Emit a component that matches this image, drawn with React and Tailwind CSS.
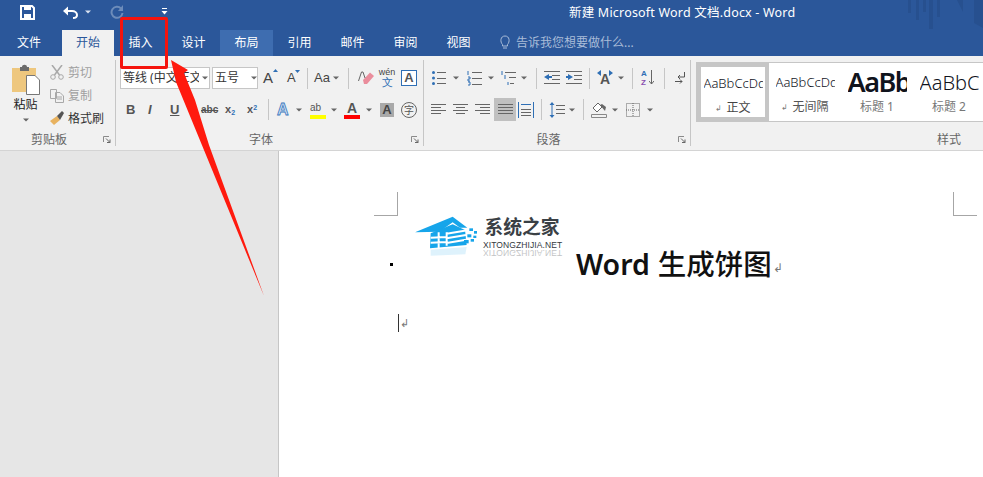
import React from "react";

const S = ({ w, h, children, className = "" }) => (
  <svg width={w} height={h} viewBox={`0 0 ${w} ${h}`} className={"block shrink-0 " + className}>{children}</svg>
);
const Caret = ({ className = "", color = "#666" }) => (
  <S w={6} h={4} className={className}><path d="M0 0.5H6L3 3.5Z" fill={color} /></S>
);
const Sep = ({ className = "" }) => <span className={"block w-px h-[21px] bg-[#c6c6c6] shrink-0 " + className} />;
const Launcher = () => (
  <S w={8} h={7} className="mb-[1px]">
    <path d="M0.5 6V0.5H6" fill="none" stroke="#8a8a8a" />
    <path d="M3 2.5L7 6.5M7 3.5V6.5H4" fill="none" stroke="#666" />
  </S>
);
const GroupLabel = ({ children }) => (
  <div className="mt-auto flex h-[12px] items-center">
    <span className="flex-1 text-center text-[12px] leading-[12px] text-[#666]">{children}</span>
    <span className="flex w-[17px] justify-start pl-[5px]"><Launcher /></span>
  </div>
);
const Lines = ({ rows, x1 = 0, x2 = 15 }) => (
  <path d={rows.map((r) => `M${r[1] ?? x1} ${r[0]}.5H${r[2] ?? x2}`).join("")} stroke="#666" fill="none" />
);

const Tab = ({ children, className = "w-[53px] text-white" }) => (
  <div className={"flex h-[26px] items-center justify-center pb-[1px] text-[12px] " + className}>{children}</div>
);

const StyleItem = ({ className, sample, mark, label, labelClass }) => (
  <div className={"flex shrink-0 flex-col items-center " + className}>
    <div className={"flex h-[33px] w-[59px] items-center overflow-hidden whitespace-nowrap text-[#10131c] " + sample}>AaBbCcDdEe</div>
    <div className={"flex h-[15px] items-center gap-[4px] text-[12px] leading-[15px] " + labelClass}>
      {mark && <span className="text-[8px] text-[#777]">↲</span>}
      {label}
    </div>
  </div>
);

export default function App() {
  return (
    <div className="relative flex h-[477px] w-[983px] flex-col overflow-hidden bg-white font-['Noto_Sans','Noto_Sans_CJK_SC',sans-serif]">
      {/* title bar */}
      <div className="relative flex h-[30px] shrink-0 items-center bg-[#2b579a]">
        <S w={983} h={30} className="absolute left-0 top-0">
          <g fill="#27508f">
            <rect x="908" width="3" height="13" /><rect x="916" width="3" height="20" /><rect x="923" width="3" height="12" />
            <rect x="929" width="4" height="29" /><rect x="937" width="3" height="17" />
            <path d="M957 0H963V12ZM974 0H983V28L974 23Z" />
          </g>
        </S>
        <S w={15} h={15} className="relative ml-[20px] -mt-[6px]">
          <path d="M1 1H12L14 3V14H1Z" fill="none" stroke="#fff" strokeWidth="2" />
          <rect x="4" y="1" width="7" height="4" fill="#fff" /><rect x="4" y="9" width="7" height="5" fill="#fff" />
        </S>
        <S w={16} h={13} className="relative ml-[27px] -mt-[6px]">
          <path d="M2 5H10C13 5 15 7 15 9C15 11 13 12 11 12" fill="none" stroke="#fff" strokeWidth="2" />
          <path d="M1 5L6 0.5V9.5Z" fill="#fff" />
        </S>
        <Caret color="#d9e2f0" className="relative ml-[7px] -mt-[6px]" />
        <S w={14} h={14} className="relative ml-[19px] -mt-[6px]">
          <path d="M11 3.5A5.5 5.5 0 1 0 12.5 8" fill="none" stroke="#6d8cba" strokeWidth="2" />
          <path d="M13 0V6H8Z" fill="#6d8cba" />
        </S>
        <S w={7} h={7} className="relative ml-[37px] -mt-[8px]">
          <path d="M1 0.5H6" stroke="#fff" /><path d="M0.5 3H6.5L3.5 6.5Z" fill="#fff" />
        </S>
        <div className="relative ml-[401px] -mt-[4px] whitespace-nowrap text-[12.5px] tracking-[0.2px] text-white">新建 Microsoft Word 文档.docx - Word</div>
      </div>

      {/* tabs */}
      <div className="flex h-[26px] shrink-0 items-center bg-[#2b579a]">
        <Tab className="w-[62px] pr-[4px] text-white">文件</Tab>
        <Tab className="w-[52px] bg-[#f1f1f1] text-[#2b579a]">开始</Tab>
        <Tab>插入</Tab>
        <Tab>设计</Tab>
        <Tab className="w-[53px] bg-[#3e6db0] text-white">布局</Tab>
        <Tab>引用</Tab>
        <Tab>邮件</Tab>
        <Tab>审阅</Tab>
        <Tab>视图</Tab>
        <S w={12} h={15} className="ml-[14px] -mt-[1px]">
          <path d="M3.5 9.5C1 7 1.2 1 6 1S11 7 8.500 9.500V11H3.500Z M4 13H8" fill="none" stroke="#a9bcd8" />
        </S>
        <span className="ml-[5px] -mt-[1px] whitespace-nowrap text-[12px] text-[#a9bcd8]">告诉我您想要做什么...</span>
      </div>

      {/* ribbon */}
      <div className="flex h-[95px] shrink-0 border-b border-[#d4d4d4] bg-[#f1f1f1] pt-[4px] text-[#444]">
        {/* clipboard */}
        <div className="flex h-[86px] w-[116px] shrink-0 flex-col border-r border-[#c6c6c6]">
          <div className="flex h-[72px]">
            <div className="ml-[12px] flex w-[28px] flex-col items-center">
              <S w={28} h={33} className="mt-[4px]">
                <path d="M0 4H24V28H0Z" fill="#eec77e" />
                <path d="M8 3H10C10 0 15 0 15 3H17V7H8Z" fill="#6b6b6b" />
                <path d="M14.500 11.500H23L27.500 16V30.500H14.500Z" fill="#fff" stroke="#777" />
              </S>
              <span className="-ml-[1px] mt-0 whitespace-nowrap text-[12px] leading-[15px] text-[#222]">粘贴</span>
              <Caret className="mt-[6px]" />
            </div>
            <div className="ml-[10px] flex flex-col pt-[1px] text-[12px] leading-[15px]">
              <div className="flex h-[23px] items-center gap-[4px] text-[#a0a0a0]">
                <S w={14} h={15}>
                  <path d="M2 0L9.500 10M12 0L4.500 10" stroke="#a8a8a8" strokeWidth="1.500" fill="none" />
                  <circle cx="3" cy="12" r="2.300" fill="none" stroke="#a8a8a8" /><circle cx="11" cy="12" r="2.300" fill="none" stroke="#a8a8a8" />
                </S>
                剪切
              </div>
              <div className="flex h-[23px] items-center gap-[4px] text-[#a0a0a0]">
                <S w={14} h={14}>
                  <path d="M0.500 0.500H6.500V9.500H0.500ZM5.500 3.500H10L13.500 7V13.500H5.500Z" fill="#f1f1f1" stroke="#a8a8a8" />
                  <path d="M7 8H12M7 10H12" stroke="#a8a8a8" />
                </S>
                复制
              </div>
              <div className="flex h-[23px] items-center gap-[4px] text-[#333]">
                <S w={14} h={15}>
                  <path d="M0 10L7 5L10 9L4 14Z" fill="#e8b25f" />
                  <path d="M7 5L12 0L14 2L10 9Z" fill="#555" />
                </S>
                格式刷
              </div>
            </div>
          </div>
          <GroupLabel>剪贴板</GroupLabel>
        </div>

        {/* font */}
        <div className="flex h-[86px] w-[308px] shrink-0 flex-col border-r border-[#c6c6c6]">
          <div className="mt-[7px] flex h-[22px] items-center">
            <div className="ml-[4px] flex h-[22px] w-[90px] shrink-0 items-center border border-[#c6c6c6] bg-white pl-[2px] text-[12px] text-[#333]">
              <span className="w-[76px] overflow-hidden whitespace-nowrap">等线 (中文正文)</span>
              <Caret className="ml-[3px]" />
            </div>
            <div className="ml-[2px] flex h-[22px] w-[46px] shrink-0 items-center border border-[#c6c6c6] bg-white pl-[2px] text-[12px] text-[#333]">
              <span className="w-[33px]">五号</span>
              <Caret className="ml-[3px]" />
            </div>
            <span className="relative ml-[5px] w-[15px] font-['Liberation_Sans'] text-[15px] text-[#444]">A
              <S w={5} h={3} className="absolute right-0 top-[2px]"><path d="M0 3L2.500 0L5 3Z" fill="#2f6fb5" /></S>
            </span>
            <span className="relative ml-[9px] w-[11px] font-['Liberation_Sans'] text-[13px] text-[#444]">A
              <S w={5} h={3} className="absolute -right-[2px] top-[2px]"><path d="M0 0L2.500 3L5 0Z" fill="#2f6fb5" /></S>
            </span>
            <Sep className="ml-[9px]" />
            <span className="ml-[6px] w-[16px] font-['Liberation_Sans'] text-[13px] text-[#444]">Aa</span>
            <Caret className="ml-[3px]" />
            <Sep className="ml-[9px]" />
            <S w={16} h={16} className="ml-[9px]">
              <path d="M5 10L12 2.500L16 6L9 14H6Z" fill="#ea8d9c" />
              <path d="M0.500 11L3.500 2H5L7 8" fill="none" stroke="#666" />
            </S>
            <div className="ml-[4px] flex w-[18px] flex-col items-center font-['Liberation_Sans'] text-[9px] leading-[9px] text-[#444]">
              <span>wén</span><span className="text-[11px] leading-[11px] text-[#2f6fb5]">文</span>
            </div>
            <span className="ml-[5px] flex h-[16px] w-[16px] items-center justify-center border border-[#2f6fb5] bg-white font-['Liberation_Sans'] text-[13px] font-bold text-[#555]">A</span>
          </div>
          <div className="mt-[9px] flex h-[23px] items-center font-['Liberation_Sans'] text-[#555]">
            <span className="ml-[10px] w-[9px] text-[13px] font-bold">B</span>
            <span className="ml-[13px] w-[9px] text-[13px] font-bold italic">I</span>
            <span className="ml-[13px] w-[10px] text-[13px] font-bold underline">U</span>
            <span className="ml-[21px] w-[16px] text-[10px] font-bold line-through">abc</span>
            <span className="ml-[8px] w-[12px] whitespace-nowrap text-[11px] font-bold">x<sub className="text-[7px] text-[#2f6fb5]">2</sub></span>
            <span className="ml-[10px] w-[13px] whitespace-nowrap text-[11px] font-bold">x<sup className="text-[7px] text-[#2f6fb5]">2</sup></span>
            <Sep className="ml-[8px]" />
            <span className="ml-[8px] w-[15px] text-[16px] font-bold text-[#cfe0f3] [-webkit-text-stroke:0.8px_#3b78bd]">A</span>
            <Caret className="ml-[4px]" />
            <div className="ml-[8px] flex w-[16px] flex-col items-stretch">
              <span className="h-[14px] text-[10px] leading-[13px] text-[#555]">ab</span>
              <span className="block h-[4px] bg-[#ffff00]" />
            </div>
            <Caret className="ml-[5px]" />
            <div className="ml-[7px] flex w-[16px] flex-col items-center">
              <span className="h-[14px] text-[14px] font-bold leading-[14px] text-[#555]">A</span>
              <span className="block h-[4px] w-full bg-[#ff0000]" />
            </div>
            <Caret className="ml-[6px]" />
            <span className="ml-[8px] flex h-[14px] w-[14px] items-center justify-center bg-[#a9a9a9] text-[13px] font-bold text-[#444]">A</span>
            <span className="ml-[7px] flex h-[16px] w-[16px] items-center justify-center rounded-full border border-[#666] font-['Noto_Sans_CJK_SC'] text-[10px] text-[#555]">字</span>
          </div>
          <GroupLabel>字体</GroupLabel>
        </div>

        {/* paragraph */}
        <div className="flex h-[86px] w-[267px] shrink-0 flex-col border-r border-[#c6c6c6]">
          <div className="mt-[7px] flex h-[22px] items-center">
            <S w={14} h={14} className="ml-[8px]">
              <circle cx="1.500" cy="1.500" r="1.500" fill="#2f6fb5" /><circle cx="1.500" cy="7" r="1.500" fill="#2f6fb5" /><circle cx="1.500" cy="12.500" r="1.500" fill="#2f6fb5" />
              <path d="M5 1.500H14M5 7.500H14M5 12.500H14" stroke="#666" />
            </S>
            <Caret className="ml-[7px]" />
            <S w={15} h={15} className="ml-[8px]">
              <path d="M1 0V4M1 6H3V8H1V10H3M1 11H3V14H1" fill="none" stroke="#2f6fb5" />
              <path d="M5 1.500H15M5 7.500H15M5 13.500H15" stroke="#666" />
            </S>
            <Caret className="ml-[6px]" />
            <S w={15} h={15} className="ml-[7px]">
              <path d="M1 0V4M4 4V8M7 11V14" fill="none" stroke="#2f6fb5" />
              <path d="M4 1.500H15M8 6.500H15M9 12.500H13" stroke="#666" />
            </S>
            <Caret className="ml-[5px]" />
            <Sep className="ml-[9px]" />
            <S w={16} h={14} className="ml-[7px]">
              <Lines rows={[[0, 0, 16], [4, 8, 16], [8, 8, 16], [12, 0, 16]]} />
              <path d="M0 6L5 3V5H8V7H5V9Z" fill="#2f6fb5" />
            </S>
            <S w={16} h={14} className="ml-[6px]">
              <Lines rows={[[0, 0, 16], [4, 8, 16], [8, 8, 16], [12, 0, 16]]} />
              <path d="M7 6L2 3V5H0V7H2V9Z" fill="#2f6fb5" />
            </S>
            <Sep className="ml-[7px]" />
            <span className="relative ml-[7px] flex h-[16px] w-[16px] items-end justify-center font-['Liberation_Sans'] text-[14px] font-bold leading-[14px] text-[#555]">A
              <S w={16} h={6} className="absolute left-0 top-0"><path d="M0 3L4 0V6ZM16 3L12 0V6Z" fill="#2f6fb5" /></S>
            </span>
            <Caret className="ml-[5px]" />
            <Sep className="ml-[8px]" />
            <div className="relative ml-[8px] flex h-[18px] w-[13px] flex-col font-['Liberation_Sans'] text-[8px] font-bold leading-[9px]">
              <span className="text-[#2f6fb5]">A</span>
              <span className="text-[#8a4fb0]">Z</span>
              <S w={5} h={15} className="absolute right-0 top-[1px]"><path d="M2.500 0V14M0 11L2.500 14L5 11" fill="none" stroke="#666" /></S>
            </div>
            <Sep className="ml-[10px]" />
            <S w={10} h={13} className="ml-[10px]">
              <path d="M9.500 0V5H3M5 3L3 5L5 7M0 9.500H7M5 7.500L7 9.500L5 11.500" fill="none" stroke="#555" />
            </S>
          </div>
          <div className="mt-[9px] flex h-[23px] items-center">
            <S w={15} h={11} className="ml-[7px]"><Lines rows={[[0], [3, 0, 10], [6], [9, 0, 10]]} /></S>
            <S w={15} h={11} className="ml-[7px]"><Lines rows={[[0], [3, 3, 12], [6], [9, 3, 12]]} /></S>
            <S w={15} h={11} className="ml-[7px]"><Lines rows={[[0], [3, 5, 15], [6], [9, 5, 15]]} /></S>
            <span className="ml-[4px] flex h-[23px] w-[22px] items-center justify-center bg-[#c0c0c0]">
              <S w={15} h={11}><Lines rows={[[0], [3], [6], [9]]} /></S>
            </span>
            <S w={16} h={16} className="ml-[2px]">
              <path d="M0.500 0V16M15.500 0V16M3 2.500H13" stroke="#2f6fb5" fill="none" />
              <path d="M3 7.500H13M3 10.500H13M3 13.500H13" stroke="#666" />
            </S>
            <Sep className="ml-[7px]" />
            <S w={16} h={16} className="ml-[7px]">
              <path d="M3 0L0.500 3H5.500ZM3 16L0.500 13H5.500Z M2.500 3H3.500V13H2.500Z" fill="#2f6fb5" />
              <path d="M7 3.500H16M7 7.500H16M7 11.500H16" stroke="#666" />
            </S>
            <Caret className="ml-[4px]" />
            <Sep className="ml-[8px]" />
            <S w={16} h={16} className="ml-[7px]">
              <path d="M2 6L7 1L11 5L6 10Z" fill="#fff" stroke="#666" />
              <path d="M11 2L15 5L14 9L9 3Z" fill="#666" />
              <path d="M0.500 12.500H15.500V15.500H0.500Z" fill="#f1f1f1" stroke="#888" />
            </S>
            <Caret className="ml-[5px]" />
            <S w={14} h={14} className="ml-[8px]">
              <path d="M0.500 0.500H13.500V13.500H0.500ZM7 0V14M0 7H14" fill="none" stroke="#666" strokeDasharray="1 1" />
            </S>
            <Caret className="ml-[7px]" />
          </div>
          <GroupLabel>段落</GroupLabel>
        </div>

        {/* styles */}
        <div className="flex h-[86px] flex-1 flex-col">
          <div className="ml-[5px] mt-[2px] flex h-[60px] w-[300px] shrink-0 border border-[#c6c6c6] bg-white">
            <StyleItem className="w-[72px] border-[4px] border-[#c6c6c6]" sample="text-[13px] font-light" mark label="正文" labelClass="text-[#444]" />
            <StyleItem className="w-[72px] pt-[3px]" sample="text-[13px] font-light" mark label="无间隔" labelClass="text-[#555]" />
            <StyleItem className="w-[72px] pt-[3px]" sample="text-[27px] font-semibold font-['Noto_Sans'] tracking-[-1.5px]" label="标题 1" labelClass="text-[#777]" />
            <StyleItem className="w-[72px] pt-[3px]" sample="text-[20px] font-light" label="标题 2" labelClass="text-[#777]" />
          </div>
          <div className="mt-auto flex h-[12px] items-center pl-[246px] text-[12px] leading-[12px] text-[#666]">样式</div>
        </div>
      </div>

      {/* document */}
      <div className="flex min-h-0 flex-1">
        <div className="w-[279px] shrink-0 border-r border-[#c6c6c6] bg-[#e6e6e6]" />
        <div className="relative flex-1 bg-white">
          <span className="absolute left-[95px] top-[41px] h-[24px] w-[24px] border-b border-r border-[#a6a6a6]" />
          <span className="absolute left-[674px] top-[41px] h-[24px] w-[24px] border-b border-l border-[#a6a6a6]" />
          <div className="mt-[93px] flex h-[40px] items-center pl-[111px]">
            <span className="block h-[3px] w-[3px] shrink-0 bg-black" />
            <span className="ml-[183px] whitespace-nowrap text-[28.500px] text-[#111]">
              <span className="font-semibold">Word</span>
              <span className="ml-[8px] font-['Noto_Sans_CJK_SC'] font-medium">生成饼图</span>
            </span>
            <span className="ml-[1px] mt-[8px] text-[12px] text-[#777]">↲</span>
          </div>
          <div className="ml-[119px] mt-[30px] flex h-[18px] items-center border-l border-[#333] pl-[1px] text-[11px] text-[#777]">↲</div>

          {/* watermark logo */}
          <div className="absolute left-[131px] top-[64px] h-[50px] w-[160px]">
            <svg width="160" height="50" viewBox="0 0 480 150" className="absolute left-0 top-0">
              <path d="M15 52L128 5L172 38L150 38L128 22L88 50Z" fill="#16a5ea" />
              <path d="M62 55L128 28L165 45L170 90L60 100Z" fill="#16a5ea" />
              <path d="M86 52V100M62 68L110 66M62 83L110 81M110 52V92M110 56L172 46M110 70L168 60M110 84L168 74" stroke="#fff" strokeWidth="6" fill="none" />
              <g fill="#16a5ea">
                <rect x="178" y="40" width="11" height="8" /><rect x="192" y="48" width="9" height="8" />
                <rect x="172" y="58" width="12" height="9" /><rect x="190" y="62" width="9" height="7" />
                <rect x="162" y="75" width="14" height="10" /><rect x="182" y="72" width="10" height="8" />
              </g>
              <path d="M62 104L170 96L166 118L62 122Z" fill="#16a5ea" opacity="0.14" />
            </svg>
            <div className="absolute left-[74.500px] -top-[1px] whitespace-nowrap font-['Noto_Sans_CJK_SC'] text-[18.800px] font-bold leading-[24px] text-[#3a4045]">系统之家</div>
            <div className="absolute left-[73px] top-[25px] whitespace-nowrap font-['Liberation_Sans'] text-[8.500px] leading-[10px] tracking-[0.1px] text-[#33393e]">XITONGZHIJIA.NET</div>
            <div className="absolute left-[73px] top-[33px] -scale-y-100 whitespace-nowrap font-['Liberation_Sans'] text-[8.500px] leading-[10px] tracking-[0.1px] text-[#33393e] opacity-30">XITONGZHIJIA.NET</div>
          </div>
        </div>
      </div>

      {/* annotations */}
      <div className="absolute left-[120px] top-[17px] h-[52px] w-[48px] rounded-[2px] border-[3px] border-[#f5140e]" />
      <svg width="983" height="477" viewBox="0 0 983 477" className="pointer-events-none absolute left-0 top-0">
        <path d="M171 60L188 70L184 73L195 100L209 145L264 296L176 82Z" fill="#ff1a0e" />
      </svg>
    </div>
  );
}
